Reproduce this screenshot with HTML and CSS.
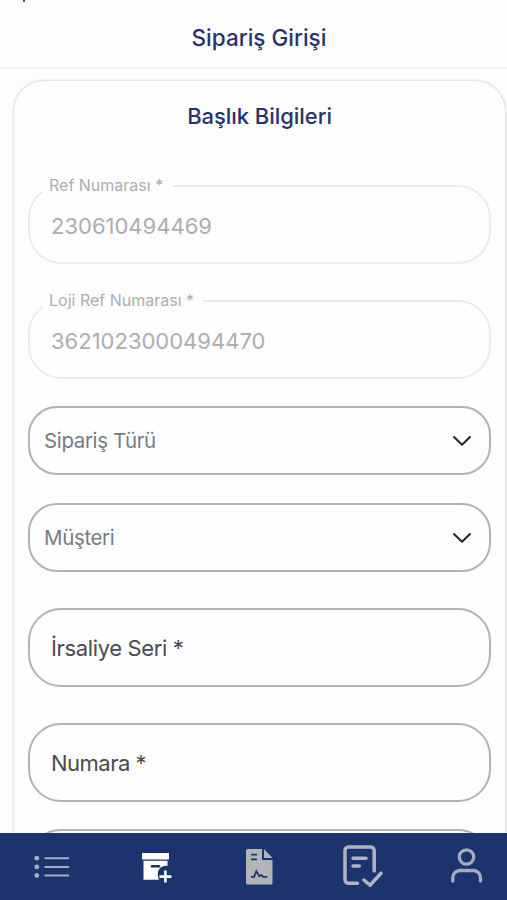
FILE: index.html
```html
<!DOCTYPE html>
<html lang="tr">
<head>
<meta charset="utf-8">
<title>Sipariş Girişi</title>
<link rel="stylesheet" href="styles.css">
</head>
<body>
<div class="screen">
  <header class="header"><span class="clip-mark"></span><h1 class="title">Sipariş Girişi</h1></header>
  <main class="content">
    <section class="card">
      <h2 class="card-title">Başlık Bilgileri</h2>
      <div class="field disabled"><span class="label ref">Ref Numarası *</span><span class="value">230610494469</span></div>
      <div class="field disabled second"><span class="label loji">Loji Ref Numarası *</span><span class="value">3621023000494470</span></div>
      <div class="select first"><span class="type">Sipariş Türü</span><svg class="chevron" viewBox="0 0 20 12"><path d="M2 2l8 7.7L18 2"/></svg></div>
      <div class="select"><span class="customer">Müşteri</span><svg class="chevron" viewBox="0 0 20 12"><path d="M2 2l8 7.7L18 2"/></svg></div>
      <div class="field series"><span class="series-text">İrsaliye Seri *</span></div>
      <div class="field number"><span class="number-text">Numara *</span></div>
      <div class="field next"></div>
    </section>
  </main>
  <nav class="tabs">
    <svg class="icon list" width="36" height="24" viewBox="0 0 36 24">
      <g fill="#a4acbe"><circle cx="2.8" cy="3.2" r="2.4"/><circle cx="2.8" cy="11.9" r="2.4"/><circle cx="2.8" cy="20.5" r="2.4"/></g>
      <path d="M11.3 3.2h23M11.3 11.9h23M11.3 20.5h23" stroke="#a4acbe" stroke-width="2" stroke-linecap="round"/>
    </svg>
    <svg class="icon archive" width="30" height="30" viewBox="0 0 30 30">
      <path fill="#fff" d="M0 0h27v6.4H0zM1.5 7.7h24v5.2c-5.3-.8-9.7 3-9.7 8 0 2.2.4 3.900 1.300 5.800H1.500z"/>
      <path d="M10 13.200h7" stroke="#1d336d" stroke-width="2.600" stroke-linecap="round"/>
      <path d="M23.400 17.600v12M17.400 23.600h12" stroke="#fff" stroke-width="2.600"/>
    </svg>
    <svg class="icon document" width="27" height="36" viewBox="0 0 27 36">
      <path fill="#b3b4b8" d="M1.500 0H16v11h10.500v23a1.500 1.500 0 0 1-1.500 1.500H1.500A1.500 1.500 0 0 1 0 34V1.500A1.500 1.500 0 0 1 1.500 0zM18 0l8.500 9H18z"/>
      <path d="M5 5.700h6M5 10.300h6M5 27.800h3l2.300-5.500 3 5 2-1.300 2 1.800h4" fill="none" stroke="#1d336d" stroke-width="1.800"/>
    </svg>
    <svg class="icon check" width="41" height="43" viewBox="0 0 41 43">
      <path d="M14.500 38.200H5.500a3.500 3.500 0 0 1-3.500-3.500V5.500A3.500 3.500 0 0 1 5.500 2h22.200a3.500 3.500 0 0 1 3.500 3.500v20.400M10 13.200h13M10 21h6.300M21 35l6 5.200 11-12" fill="none" stroke="#b0b5c0" stroke-width="3.500" stroke-linecap="round" stroke-linejoin="round"/>
    </svg>
    <svg class="icon user" width="32" height="35" viewBox="0 0 32 35">
      <path d="M1.800 33v-3.500a7 7 0 0 1 7-7h13.700a7 7 0 0 1 7 7V33" fill="none" stroke="#a4acbe" stroke-width="3.300" stroke-linecap="round"/>
      <circle cx="15.500" cy="9" r="7.200" fill="none" stroke="#a4acbe" stroke-width="3.300"/>
    </svg>
  </nav>
</div>
</body>
</html>
```
FILE: styles.css
```css
* { box-sizing: border-box; }
body { margin: 0; font-family: Inter, sans-serif; background: #fff; }
.screen { width: 507px; height: 900px; display: flex; flex-direction: column; overflow: hidden; }
.header { position: relative; height: 69px; flex: none; background: #fefefe; border-bottom: 2px solid #f3f3f3; text-align: center; padding: 24px 0 0 11px; }
.clip-mark { position: absolute; left: 23px; top: 0; width: 2px; height: 2px; background: #555; }
.title, .card-title { margin: 0; font-weight: 550; color: #26346b; white-space: nowrap; }
.title { font-size: 22.500px; line-height: 28px; letter-spacing: 0; }
.content { flex: 1; min-height: 0; overflow: hidden; padding: 12px 2px 0 14px; background: #fdfdfd; }
.card { height: 830px; background: #fefefe; border-radius: 30px; box-shadow: 0 0 3px rgba(0,0,0,.28); padding: 21px 14px 0 14px; }
.card-title { font-size: 22px; line-height: 28px; text-align: center; letter-spacing: -.05px; }
.field { position: relative; height: 79px; border: 2px solid #b2b2b2; border-radius: 33px; display: flex; align-items: center; padding-left: 21px; font-size: 22px; color: #4b4b4d; white-space: nowrap; }
.disabled { border-color: #ebebeb; margin-top: 55px; color: #adadaf; padding-top: 2px; }
.second { margin-top: 36px; }
.label { position: absolute; left: 13px; top: -12px; height: 20px; line-height: 20px; padding-left: 6px; background: #fefefe; font-size: 16px; }
.ref { width: 130px; }
.loji { width: 160px; }
.select { height: 69px; margin-top: 28px; border: 2px solid #b2b2b2; border-radius: 29px; display: flex; align-items: center; justify-content: space-between; padding: 0 17px 0 14px; font-size: 20.500px; letter-spacing: -.36px; color: #777b80; }
.first { margin-top: 27px; }
.chevron { width: 20px; height: 12px; fill: none; stroke: #252527; stroke-width: 2; stroke-linecap: round; stroke-linejoin: round; }
.series, .number { margin-top: 36px; letter-spacing: -.36px; }
.number { letter-spacing: -.5px; }
.next { margin-top: 27px; }
.tabs { flex: none; height: 67px; background: #1d336d; display: flex; align-items: flex-start; }
.icon { flex: none; display: block; }
.list { margin: 22px 0 0 34px; }
.archive { margin: 20px 0 0 72px; }
.document { margin: 16px 0 0 74px; }
.check { margin: 12px 0 0 70px; }
.user { margin: 15px 0 0 67px; }
```
